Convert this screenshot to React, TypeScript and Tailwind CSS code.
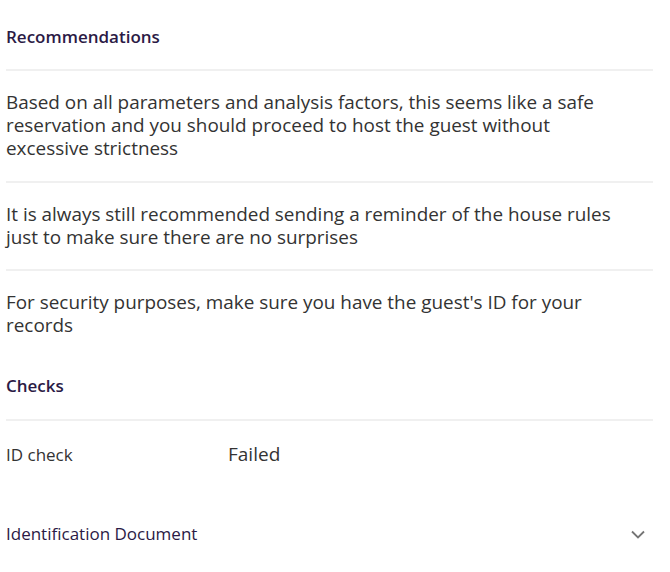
import React from "react";

const font = { fontFamily: "'Open Sans', sans-serif" };

export default function App() {
  return (
    <div className="w-[670px] h-[572px] bg-white pl-[6px] pr-[17px]" style={font}>
      <div className="pt-[25px] pb-[20px] border-b-2 border-[#f0f0f0]">
        <h2 className="text-[17px] leading-[24px] font-semibold text-[#2b1a45]">Recommendations</h2>
      </div>
      <div className="pt-[20px] pb-[21px] border-b-2 border-[#f0f0f0]">
        <p className="text-[18.9px] leading-[23px] text-[#333333] max-w-[605px]">
          Based on all parameters and analysis factors, this seems like a safe reservation and you should proceed to host the guest without excessive strictness
        </p>
      </div>
      <div className="pt-[20px] pb-[20px] border-b-2 border-[#f0f0f0]">
        <p className="text-[18.9px] leading-[23px] text-[#333333] max-w-[625px]">
          It is always still recommended sending a reminder of the house rules just to make sure there are no surprises
        </p>
      </div>
      <div className="pt-[20px]">
        <p className="text-[18.9px] leading-[23px] text-[#333333] max-w-[605px]">
          For security purposes, make sure you have the guest's ID for your records
        </p>
      </div>
      <div className="pt-[37px] pb-[21px] border-b-2 border-[#f0f0f0]">
        <h2 className="text-[17px] leading-[24px] font-semibold text-[#2b1a45]">Checks</h2>
      </div>
      <div className="flex items-center h-[66px]">
        <span className="w-[222px] text-[17px] leading-[24px] text-[#333333] pt-[2px]">ID check</span>
        <span className="text-[19px] leading-[24px] text-[#333333]">Failed</span>
      </div>
      <div className="flex items-center justify-between mt-[35px]">
        <span className="text-[17px] leading-[24px] text-[#2b1a45]">Identification Document</span>
        <svg width="14" height="9" viewBox="0 0 14 9" className="mr-[8px]">
          <path d="M1 1.5 L7 7.5 L13 1.5" fill="none" stroke="#757575" strokeWidth="1.8" />
        </svg>
      </div>
    </div>
  );
}
